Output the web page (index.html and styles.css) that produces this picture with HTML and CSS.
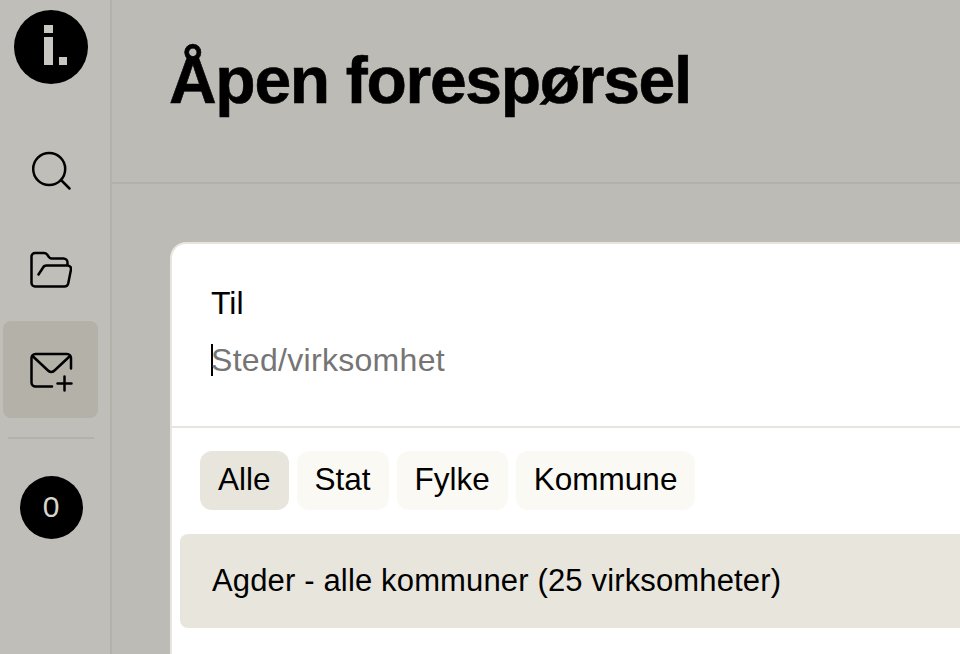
FILE: index.html
```html
<!DOCTYPE html>
<html lang="no">
<head>
  <meta charset="UTF-8">
  <meta name="viewport" content="width=device-width, initial-scale=1.0">
  <title>Åpen forespørsel</title>
  <link rel="stylesheet" href="styles.css">
</head>
<body>
  <!-- Sidemeny -->
  <nav class="sidebar">
    <div class="logo"><span class="logo-i"></span><span class="logo-dot"></span></div>
    <a class="nav-item nav-search">
      <svg width="44" height="44" viewBox="0 0 44 44" fill="none" stroke="#000" stroke-width="2.5" stroke-linecap="round"><circle cx="21.2" cy="20" r="16"/><path d="M33 31l8.500 8.500"/></svg>
    </a>
    <a class="nav-item nav-folder">
      <svg width="44" height="38" viewBox="0 0 44 38" fill="none" stroke="#000" stroke-width="2.5" stroke-linecap="round" stroke-linejoin="round"><path d="M39.500 14.500v-3a4 4 0 0 0-4-4H23.500c-1 0-1.800-.4-2.400-1.200l-2-2.800C18.300 2.500 17.300 2 16 2H7a3.500 3.500 0 0 0-3.500 3.500V32A3.500 3.500 0 0 0 7 35.500h29.500c2 0 3.200-1 3.700-3l2.700-13.500c.5-2.600-.9-4.500-3.400-4.500H18.500c-1.800 0-3 .8-3.700 2.500l-4.300 6.500"/></svg>
    </a>
    <a class="nav-item nav-active">
      <svg width="44" height="38" viewBox="0 0 44 38" fill="none" stroke="#000" stroke-width="2.5" stroke-linecap="round" stroke-linejoin="round" overflow="visible"><path d="M24 35.500H7.500a4 4 0 0 1-4-4V7a4 4 0 0 1 4-4h31.500a4 4 0 0 1 4 4v10.500"/><path d="M4.500 5l15.500 14.500c2 1.800 4.500 1.800 6.500 0L42 5"/><path d="M36.500 25.500v14M29.500 32.500h14"/></svg>
    </a>
    <div class="nav-sep"></div>
    <div class="count">0</div>
  </nav>

  <main class="main">
    <header class="page-head">
      <h1>Åpen forespørsel</h1>
    </header>
    <section class="content">
      <div class="card">
        <div class="to-field">
          <label class="to-label">Til</label>
          <div class="to-input"><span class="caret"></span><span class="placeholder">Sted/virksomhet</span></div>
        </div>
        <div class="filters">
          <button class="chip chip-active">Alle</button>
          <button class="chip">Stat</button>
          <button class="chip">Fylke</button>
          <button class="chip">Kommune</button>
        </div>
        <div class="result">Agder - alle kommuner (25 virksomheter)</div>
      </div>
    </section>
  </main>
</body>
</html>
```

FILE: styles.css
```css
* {
  box-sizing: border-box;
}
html, body {
  height: 100%;
}
body {
  margin: 0;
  display: flex;
  overflow: hidden;
  font-family: "Liberation Sans", Arial, sans-serif;
  color: #000;
  background-color: #bcbbb5;
}
.sidebar {
  width: 112px;
  flex-shrink: 0;
  border-right: 2px solid #b2b1aa;
  background-color: #bfbeb8;
  display: flex;
  flex-direction: column;
  align-items: center;
  padding: 10px 12px 0 3px;
}
.logo {
  width: 74px;
  height: 74px;
  flex-shrink: 0;
  border-radius: 50%;
  background-color: #000;
  margin-left: 1px;
  display: flex;
  align-items: flex-end;
  justify-content: center;
  gap: 6px;
  padding: 0 0 19px 9px;
}
.logo-i {
  width: 9px;
  height: 40px;
  background: linear-gradient(#c8c7c1 0 8px, transparent 8px 12px, #c8c7c1 12px);
}
.logo-dot {
  width: 8px;
  height: 8px;
  background-color: #c8c7c1;
}
.nav-item {
  width: 95px;
  height: 97px;
  flex-shrink: 0;
  display: flex;
  align-items: center;
  justify-content: center;
  padding-right: 2px;
  border-radius: 8px;
}
.nav-search {
  margin-top: 41px;
  height: 92px;
}
.nav-folder {
  margin-top: 4px;
}
.nav-active {
  margin-top: 3px;
  background-color: #b3b1a8;
}
.nav-sep {
  width: 86px;
  height: 2px;
  flex-shrink: 0;
  margin-top: 19px;
  background-color: #b2b1aa;
}
.count {
  width: 63px;
  height: 63px;
  flex-shrink: 0;
  margin: 37px 0 0 1px;
  padding-bottom: 2px;
  border-radius: 50%;
  background-color: #000;
  color: #d8d6cc;
  font-size: 30px;
  display: flex;
  align-items: center;
  justify-content: center;
}
.main {
  flex: 1;
  min-width: 0;
  overflow: hidden;
}
.page-head {
  height: 184px;
  border-bottom: 2px solid #b2b1aa;
  padding: 40px 0 0 57px;
}
.page-head h1 {
  margin: 0;
  font-size: 66px;
  line-height: 80px;
  font-weight: bold;
  letter-spacing: -1.3px;
  -webkit-text-stroke: 0.6px #000;
  white-space: nowrap;
}
.content {
  padding: 58px 0 0 58px;
}
.card {
  width: 900px;
  height: 420px;
  background-color: #fff;
  border: 2px solid #e8e5dc;
  border-right: 0;
  border-bottom: 0;
  border-radius: 16px 0 0 0;
}
.to-field {
  height: 184px;
  border-bottom: 2px solid #e8e5dc;
  padding: 41px 39px 0;
}
.to-label {
  display: block;
  font-size: 32px;
  line-height: 36px;
}
.to-input {
  display: flex;
  align-items: center;
  margin-top: 21px;
  height: 36px;
  font-size: 32px;
  letter-spacing: 0.3px;
}
.caret {
  width: 2px;
  height: 32px;
  margin-right: -2px;
  background-color: #000;
}
.placeholder {
  color: #757575;
}
.filters {
  display: flex;
  gap: 8px;
  padding: 23px 0 0 28px;
}
.chip {
  height: 59px;
  padding: 0 18px 2px;
  border: 0;
  border-radius: 12px;
  background-color: #fbf9f3;
  font-family: inherit;
  font-size: 31.5px;
  color: #000;
}
.chip-active {
  background-color: #e8e5dc;
}
.result {
  display: flex;
  align-items: center;
  height: 94px;
  margin: 24px 0 0 8px;
  padding-left: 32px;
  border-radius: 8px 0 0 8px;
  background-color: #e8e5dc;
  font-size: 31px;
  letter-spacing: 0.15px;
  white-space: nowrap;
}
```
